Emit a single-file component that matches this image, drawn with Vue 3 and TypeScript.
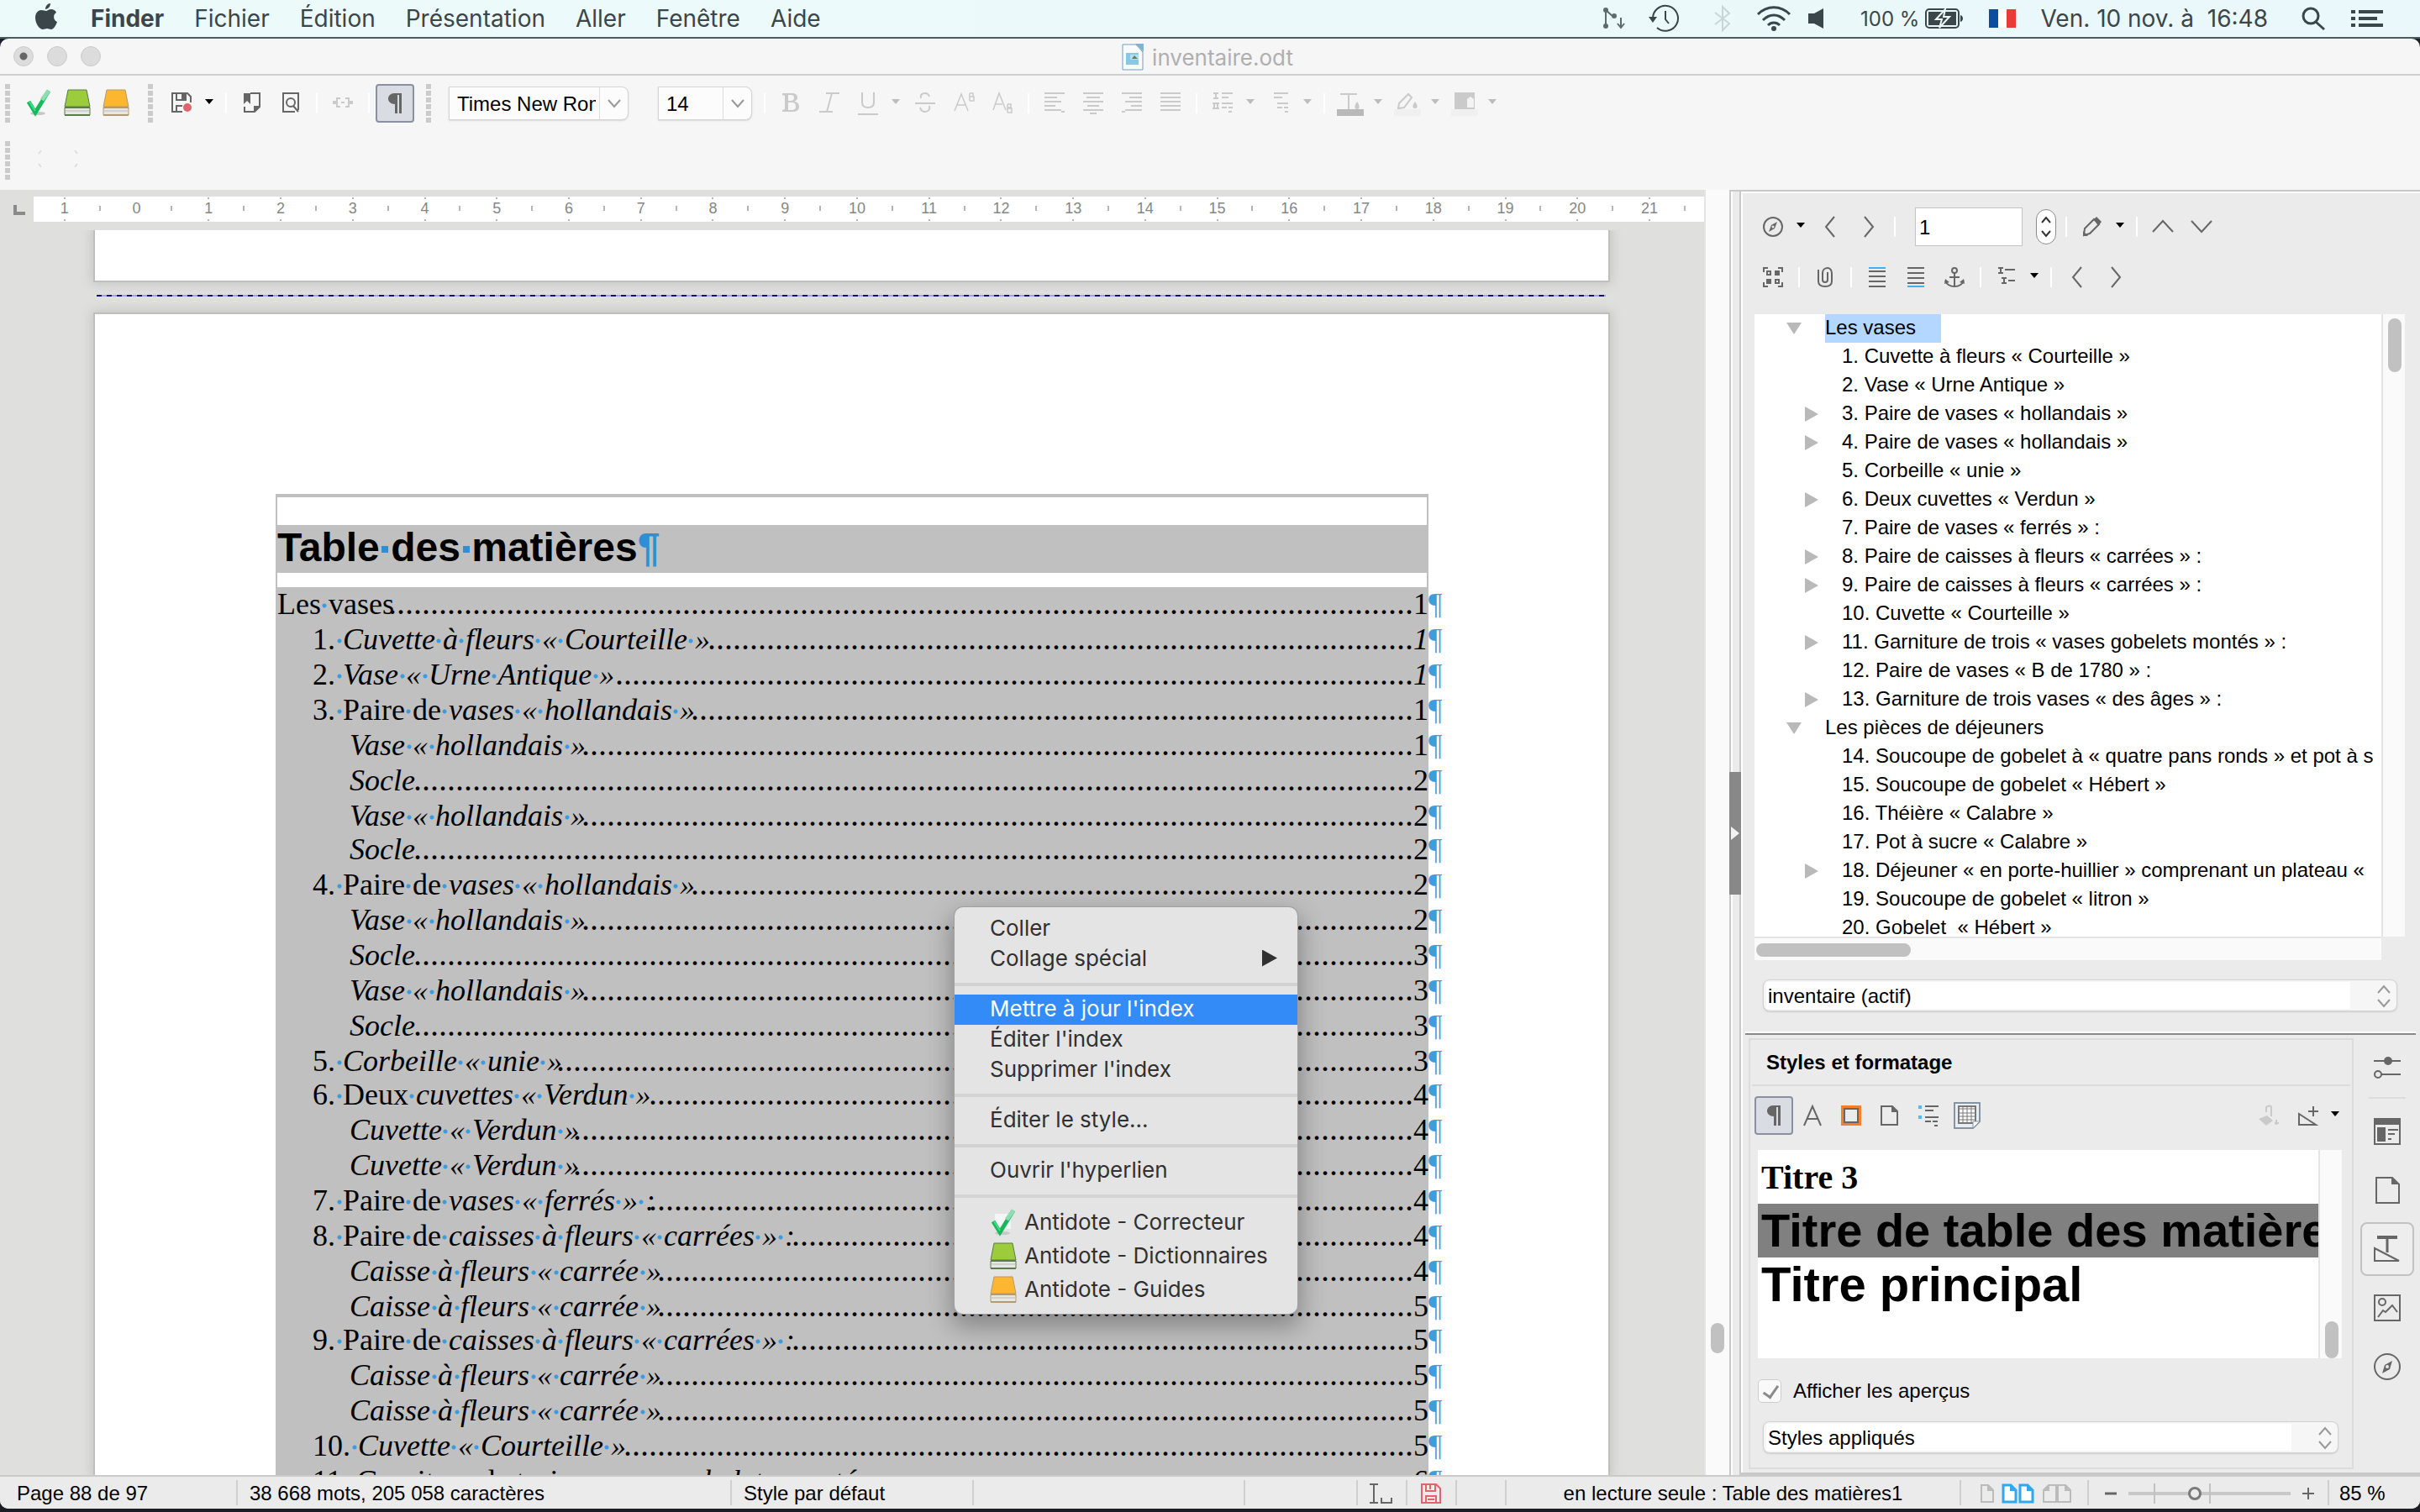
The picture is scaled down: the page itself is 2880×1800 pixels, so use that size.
<script setup lang="ts">
import { nextTick, onMounted, ref } from 'vue'

interface Tool {
  kind: 'btn' | 'sep' | 'drop'
  icon?: string
  label?: string
  off?: boolean
  on?: boolean
  big?: boolean
}
interface TocRow {
  level: number
  text: string
  page: string
  it?: boolean
}
interface TreeRow {
  text: string
  top?: boolean
  kids?: boolean
}

const line = 'fill="none" stroke="currentColor" stroke-width="2"'
const book = (c: string, d: string) =>
  `<path d="M5 1h22l4 20H1z" fill="${c}" stroke="${d}" stroke-width="1"/><path d="M1 22h30v9H1z" fill="#e6e6e2" stroke="${d}" stroke-width="1"/><path d="M1 22h30M1 31h30" stroke="${d}" stroke-width="2"/><path d="M2 26h28" stroke="#bbb" stroke-width="1"/>`
const bars = (rows: number[][]) =>
  rows.map(([x, y, w]) => `<path d="M${x} ${y}h${w}" ${line}/>`).join('')

const icons: Record<string, string> = {
  check: '<path d="M6 6h19v18H6z" fill="#f4f6f6"/><ellipse cx="15" cy="29" rx="9" ry="2" fill="#c4c8c6"/><path d="M4 15l8 13L28 2" fill="none" stroke="#17b95a" stroke-width="5"/><path d="M20 13L28 2" fill="none" stroke="#8fdcb4" stroke-width="5"/><path d="M5 15l7 11" fill="none" stroke="#3fe08a" stroke-width="2"/>',
  bookGreen: book('#9ccb3b', '#5c7a4c'),
  bookOrange: book('#fdb62f', '#b49a70'),
  save: `<path d="M13 23H1V1h18l4 4v7M6 1v8h11V1M6 23v-7h7" ${line}/><path d="M12 2h4v6h-4z" fill="currentColor"/><circle cx="19" cy="18" r="5" fill="#e0636e"/>`,
  bookmark: `<path d="M10 1h11v16l-6 6H3v-6" ${line}/><path d="M2 1h8v13l-4-4-4 4zM14 16h8l-8 8z" fill="currentColor"/>`,
  preview: `<path d="M17 23H3V1h18v20" ${line}/><circle cx="12" cy="12" r="5" ${line}/><path d="M15 16l6 7" ${line}/>`,
  link: `<path d="M9 7H5v4H1v2h4v4h4M15 7h4v4h4v2h-4v4h-4M10 12h4" ${line}/>`,
  pilcrow: '<path d="M11 0h9v24h-3V2h-2v22h-3V13C7 13 4 10 4 6.500S7 0 11 0z" fill="currentColor"/>',
  bold: '<path d="M2 1h11c5 0 7 2 7 5 0 3-2 4-4 5 3 0 6 2 6 6 0 4-3 6-8 6H2v-2l3-1V4L2 3zM9 3v7h3c2 0 4-1 4-3.500S15 3 12 3zM9 12v9h4c3 0 5-1 5-4.500S16 12 13 12z" fill="currentColor" fill-rule="evenodd"/>',
  italic: `<path d="M8 1h16M0 23h16M15 1L9 23" ${line}/>`,
  underline: `<path d="M5 0v12c0 4 2 6 7 6s7-2 7-6V0M0 26h24" ${line}/>`,
  strike: `<path d="M17 5c-1-3-3-4-5-4-4 0-6 2-5 6M17 16c1 4-1 7-5 7-3 0-5-1-6-5M0 13h24" ${line}/>`,
  sup: `<path d="M1 22L9 2l8 20M4 15h10M19 1v9M19 1h4v4h-4M19 5h5v5h-5" fill="none" stroke="currentColor" stroke-width="1.500"/>`,
  sub: `<path d="M1 21L8 1l8 20M4 14h8M18 14v10M18 14h4v4h-4M18 19h5v5h-5" fill="none" stroke="currentColor" stroke-width="1.500"/>`,
  left: bars([[0, 1, 24], [0, 6, 15], [0, 11, 20], [0, 16, 13], [0, 21, 20]]) + '<path d="M20 22h4v2h-4z" fill="currentColor"/>',
  center: bars([[0, 1, 24], [4, 6, 16], [0, 11, 24], [5, 16, 14], [0, 21, 24], [8, 25, 8]]),
  right: bars([[0, 1, 24], [9, 6, 15], [4, 11, 20], [11, 16, 13], [4, 21, 20]]) + '<path d="M0 22h4v2H0z" fill="currentColor"/>',
  justify: bars([[0, 1, 24], [0, 6, 24], [0, 11, 24], [0, 16, 24], [0, 21, 24]]),
  numbers: bars([[1, 1, 6], [1, 7, 6], [11, 1, 13], [11, 6, 8], [0, 13, 8], [0, 19, 8], [11, 13, 13], [11, 18, 6], [19, 18, 5], [19, 23, 4]]) + `<path d="M4 1v6M2 13v6M6 13v6" ${line}/>`,
  outline: bars([[5, 1, 17], [5, 6, 10], [9, 13, 13], [9, 18, 6], [17, 18, 5], [18, 23, 4]]),
  fontColor: `<path d="M4 2h20M14 2v18" ${line}/><path d="M24 11c3 4 4 9 0 9s-3-5 0-9z" fill="currentColor"/><path d="M0 20h32v8H0z" fill="#b9b9b9"/>`,
  highlight: `<path d="M6 13L17 2l4 4-9 12-7 1z" ${line}/><path d="M25 11c3 4 4 8 0 8s-3-4 0-8z" fill="currentColor"/><path d="M0 20h32v8H0z" fill="#f0f0f0"/>`,
  fill: '<path d="M4 0h24v20H4z" fill="currentColor"/><path d="M19 8l4-3 4 3v10h-8z" fill="#f3f3f3"/><path d="M0 20h32v8H0z" fill="#f0f0f0"/>',
  compass: `<circle cx="12" cy="12" r="11" ${line}/><path d="M17 6l-3 8-7 4 3-8z" fill="currentColor"/><circle cx="12" cy="12" r="1.500" fill="#ebebeb"/>`,
  prev: `<path d="M17 0L7 12l10 12" ${line}/>`,
  next: `<path d="M7 0l10 12L7 24" ${line}/>`,
  up: `<path d="M0 18L12 5l12 13" ${line}/>`,
  down: `<path d="M0 5l12 13L24 5" ${line}/>`,
  pencil: `<path d="M2 22l1-8L14 3l6 6L9 20z" ${line}/><path d="M14 3l3-3 6 6-4 5zM1 17l6 6H1z" fill="currentColor"/>`,
  content: `<path d="M1 6V1h5M18 1h5v5M23 18v5h-5M6 23H1v-5" ${line}/><path d="M5 5h4v4H5zM15 15h4v4h-4z" ${line}/><path d="M14 4h6v6h-6zM4 14h6v6H4z" fill="currentColor"/>`,
  clip: `<path d="M4 3v14c0 4 3 6 8 6s8-2 8-6V7c0-3-2-6-5-6S9 3 9 7v8c0 4 6 4 6 0V6" ${line}/>`,
  header: `<path d="M2 1h20" stroke="#3fb0f0" stroke-width="2"/>` + bars([[2, 5, 20], [2, 11, 20], [2, 17, 20], [2, 23, 20]]),
  footer: bars([[2, 1, 20], [2, 7, 20], [2, 13, 20], [2, 19, 20]]) + `<path d="M2 23h20" stroke="#3fb0f0" stroke-width="2"/>`,
  anchor: `<circle cx="12" cy="4" r="3" ${line}/><path d="M12 7v16M6 12h12M1 16c2 5 6 7 11 7s9-2 11-7" ${line}/><path d="M0 20l1-6 5 4zM24 20l-1-6-5 4z" fill="currentColor"/>`,
  levels: `<path d="M2 1h6M2 7h6M5 1v6M10 3h12M6 13h6M6 19h6M9 13v6M14 16h8" ${line}/>`,
  letterA: `<path d="M2 24L12 1l10 23M6 16h12" ${line}/>`,
  frame: '<path d="M2 2h20v20H2z" fill="none" stroke="#f57f2c" stroke-width="4"/><path d="M4 4h16v16H4z" fill="none" stroke="#666" stroke-width="2"/>',
  page: `<path d="M2 1h13l6 6v16H2z" ${line}/><path d="M14 0l8 8h-8z" fill="currentColor"/>`,
  list: `<path d="M0 0h4v4H0zM0 12h4v4H0z" fill="#55b9ee"/>` + bars([[8, 1, 16], [8, 6, 10], [8, 14, 16], [8, 19, 7], [17, 19, 6], [19, 24, 4]]),
  table: '<path d="M1 1h30v22l-8 8H1z" fill="#e8eef2" stroke="#8494a2" stroke-width="2"/><path d="M6 5h20v20H6z" fill="#fff" stroke="#777" stroke-width="2"/><path d="M6 8h20M6 13h20M6 17h20M6 21h20M11 5v20M16 5v20M21 5v20" stroke="#777" stroke-width="1"/><path d="M23 23h8l-8 8z" fill="#fff" stroke="#8494a2"/>',
  can: `<path d="M9 8V2c2-2 6-2 6 0v11" ${line}/><path d="M0 16l10-4 7 6-8 6z" fill="currentColor"/><path d="M21 17v6M19 21h5" ${line}/>`,
  newStyle: `<path d="M2 10v13h20zM19 1v12M13 7h12" ${line}/>`,
  sliders: `<path d="M0 8h32M9 24h23" ${line}/><circle cx="17" cy="8" r="5" fill="currentColor"/><circle cx="5" cy="24" r="4" ${line}/>`,
  properties: `<path d="M1 1h30v30H1z" ${line}/><path d="M0 0h32v8H0zM4 11h10v17H4z" fill="currentColor"/><path d="M17 14h12M17 19h8M17 25h4" ${line}/>`,
  pageBig: `<path d="M3 1h19l8 8v22H3z" ${line}/><path d="M21 0l9 9h-9z" fill="currentColor"/>`,
  styles: `<path d="M4 2h24" fill="none" stroke="currentColor" stroke-width="4"/><path d="M16 3v17" fill="none" stroke="currentColor" stroke-width="3"/><path d="M1 15v15h29z" ${line}/>`,
  gallery: `<path d="M1 1h30v30H1z" ${line}/><circle cx="10" cy="9" r="4" ${line}/><path d="M5 27l6-8 3 2 8-8 6 8" ${line}/>`,
  compassBig: `<circle cx="16" cy="16" r="15" ${line}/><path d="M22 9l-3 10-9 5 3-10z" fill="currentColor"/><circle cx="16" cy="16" r="2" fill="#ebebeb"/>`,
}

const menus = ['Fichier', 'Édition', 'Présentation', 'Aller', 'Fenêtre', 'Aide']

const b = (icon: string, label: string, extra: Partial<Tool> = {}): Tool => ({ kind: 'btn', icon, label, ...extra })
const sep: Tool = { kind: 'sep' }
const drop: Tool = { kind: 'drop', label: 'Plus' }
const dropOff: Tool = { kind: 'drop', label: 'Plus', off: true }
const off = { off: true }

const antidote: Tool[] = [
  b('check', 'Correcteur', { big: true }),
  b('bookGreen', 'Dictionnaires', { big: true }),
  b('bookOrange', 'Guides', { big: true }),
]
const standard: Tool[] = [
  b('save', 'Enregistrer'), drop, sep, b('bookmark', 'Repère'), b('preview', 'Aperçu'), sep,
  b('link', 'Lien', off), sep, b('pilcrow', 'Marques', { on: true }),
]
const format: Tool[] = [
  sep, b('bold', 'Gras', off), b('italic', 'Italique', off), b('underline', 'Souligné', off), dropOff,
  b('strike', 'Barré', off), b('sup', 'Exposant', off), b('sub', 'Indice', off), sep,
  b('left', 'Gauche', off), b('center', 'Centré', off), b('right', 'Droite', off), b('justify', 'Justifié', off), sep,
  b('numbers', 'Numéros', off), dropOff, b('outline', 'Plan', off), dropOff, sep,
  b('fontColor', 'Couleur', { off: true, big: true }), dropOff,
  b('highlight', 'Surlignage', { off: true, big: true }), dropOff,
  b('fill', 'Arrière-plan', { off: true, big: true }), dropOff,
]
const navA: Tool[] = [b('compass', 'Navigation'), drop, b('prev', 'Précédent'), b('next', 'Suivant'), sep]
const navB: Tool[] = [sep, b('pencil', 'Rappel'), drop, sep, b('up', 'Monter'), b('down', 'Descendre')]
const navC: Tool[] = [
  b('content', 'Contenu'), sep, b('clip', 'Mode glisser'), sep, b('header', 'En-tête'), b('footer', 'Pied de page'),
  b('anchor', 'Ancre'), sep, b('levels', 'Niveaux'), drop, sep, b('prev', 'Hausser'), b('next', 'Abaisser'),
]
const styleA: Tool[] = [
  b('pilcrow', 'Paragraphe', { on: true }), b('letterA', 'Caractère'), b('frame', 'Cadre'), b('page', 'Page'),
  b('list', 'Liste'), b('table', 'Tableau', { big: true }),
]
const styleB: Tool[] = [b('can', 'Remplir', off), b('newStyle', 'Nouveau style'), drop]

const ruler = ['1', ...Array.from({ length: 22 }, (_, i) => String(i))]

const toc: TocRow[] = [
  { level: 0, text: 'Les vases', page: '1' },
  { level: 1, text: '1. |Cuvette à fleurs « Courteille »', page: '1', it: true },
  { level: 1, text: '2. |Vase « Urne Antique »', page: '1', it: true },
  { level: 1, text: '3. Paire de |vases « hollandais »', page: '1' },
  { level: 2, text: '|Vase « hollandais »', page: '1' },
  { level: 2, text: '|Socle', page: '2' },
  { level: 2, text: '|Vase « hollandais »', page: '2' },
  { level: 2, text: '|Socle', page: '2' },
  { level: 1, text: '4. Paire de |vases « hollandais »', page: '2' },
  { level: 2, text: '|Vase « hollandais »', page: '2' },
  { level: 2, text: '|Socle', page: '3' },
  { level: 2, text: '|Vase « hollandais »', page: '3' },
  { level: 2, text: '|Socle', page: '3' },
  { level: 1, text: '5. |Corbeille « unie »', page: '3' },
  { level: 1, text: '6. Deux |cuvettes « Verdun »', page: '4' },
  { level: 2, text: '|Cuvette « Verdun »', page: '4' },
  { level: 2, text: '|Cuvette « Verdun »', page: '4' },
  { level: 1, text: '7. Paire de |vases « ferrés » :', page: '4' },
  { level: 1, text: '8. Paire de |caisses à fleurs « carrées » :', page: '4' },
  { level: 2, text: '|Caisse à fleurs « carrée »', page: '4' },
  { level: 2, text: '|Caisse à fleurs « carrée »', page: '5' },
  { level: 1, text: '9. Paire de |caisses à fleurs « carrées » :', page: '5' },
  { level: 2, text: '|Caisse à fleurs « carrée »', page: '5' },
  { level: 2, text: '|Caisse à fleurs « carrée »', page: '5' },
  { level: 1, text: '10. |Cuvette « Courteille »', page: '5' },
  { level: 1, text: '11. Garniture de trois |« vases gobelets montés » :', page: '6' },
]

/* Fills each tab leader with dots up to the end of the entry's text. */
const DOT = 10
const rowsBox = ref<HTMLElement | null>(null)
const leaders = ref<number[]>(toc.map(() => 0))
const fillLeaders = () => {
  const els = rowsBox.value?.querySelectorAll<HTMLElement>('.leader') ?? []
  leaders.value = Array.from(els, (el) => Math.round((el.clientWidth + 3) / DOT))
}
onMounted(async () => {
  await nextTick()
  fillLeaders()
  window.addEventListener('resize', fillLeaders)
})

/* Splits an entry into upright and italic runs, then into words and spaces. */
const runs = (text: string) =>
  text.split('|').map((part, i) => ({ italic: i === 1, bits: part.split(/( )/).filter((s) => s !== '') }))

const tree: TreeRow[] = [
  { text: 'Les vases', top: true },
  { text: '1. Cuvette à fleurs « Courteille »' },
  { text: '2. Vase « Urne Antique »' },
  { text: '3. Paire de vases « hollandais »', kids: true },
  { text: '4. Paire de vases « hollandais »', kids: true },
  { text: '5. Corbeille « unie »' },
  { text: '6. Deux cuvettes « Verdun »', kids: true },
  { text: '7. Paire de vases « ferrés » :' },
  { text: '8. Paire de caisses à fleurs « carrées » :', kids: true },
  { text: '9. Paire de caisses à fleurs « carrées » :', kids: true },
  { text: '10. Cuvette « Courteille »' },
  { text: '11. Garniture de trois « vases gobelets montés » :', kids: true },
  { text: '12. Paire de vases « B de 1780 » :' },
  { text: '13. Garniture de trois vases « des âges » :', kids: true },
  { text: 'Les pièces de déjeuners', top: true },
  { text: '14. Soucoupe de gobelet à « quatre pans ronds » et pot à s' },
  { text: '15. Soucoupe de gobelet « Hébert »' },
  { text: '16. Théière « Calabre »' },
  { text: '17. Pot à sucre « Calabre »' },
  { text: '18. Déjeuner « en porte-huillier » comprenant un plateau «', kids: true },
  { text: '19. Soucoupe de gobelet « litron »' },
  { text: '20. Gobelet  « Hébert »' },
]
const selected = ref(0)

const tabs = ['properties', 'pageBig', 'styles', 'gallery', 'compassBig']
const tabNames = ['Propriétés', 'Page', 'Styles', 'Galerie', 'Navigateur']
const activeTab = ref(2)

const ctxGroups = [
  ['Coller', 'Collage spécial'],
  ["Mettre à jour l'index", "Éditer l'index", "Supprimer l'index"],
  ['Éditer le style...'],
  ["Ouvrir l'hyperlien"],
]
const ctxTools = [
  { icon: 'check', text: 'Antidote - Correcteur' },
  { icon: 'bookGreen', text: 'Antidote - Dictionnaires' },
  { icon: 'bookOrange', text: 'Antidote - Guides' },
]

const fontName = ref('Times New Roman')
const fontSize = ref('14')
const pageNo = ref('1')
const previews = ref(true)
const zoom = ref(40)
</script>

<template>
  <div class="screen">
    <header class="menubar">
      <svg class="apple" viewBox="0 0 26 32"><path d="M18 0c0 4-3 7-6 7 0-4 3-7 6-7zM13 9c1 0 3-2 6-2 2 0 5 1 6 4-4 2-4 9 1 11-1 3-4 9-7 9-2 0-3-1-5-1s-3 1-5 1C5 31 0 24 0 17 0 11 4 8 7 8c3 0 4 1 6 1z" fill="currentColor" /></svg>
      <nav class="menus">
        <a href="#" class="app-name">Finder</a>
        <a v-for="m in menus" :key="m" href="#">{{ m }}</a>
      </nav>
      <div class="status-icons">
        <svg class="i-git" viewBox="0 0 26 26"><g fill="none" stroke="#5e6b6e" stroke-width="2"><path d="M3 3v19M3 3l9 8M21 12v11M17 19l4 5 4-5" /></g><g fill="#5e6b6e"><circle cx="3" cy="3" r="3" /><circle cx="3" cy="22" r="3" /><circle cx="13" cy="10" r="3" /></g></svg>
        <svg class="i-clock" viewBox="0 0 36 34"><path d="M5 17a15 15 0 1 1 5 11" fill="none" stroke="currentColor" stroke-width="2" /><path d="M0 15h10l-5 7z" fill="currentColor" /><path d="M20 8v10l4 5" fill="none" stroke="currentColor" stroke-width="2" /></svg>
        <svg class="i-bt" viewBox="0 0 20 32"><path d="M1 9l17 13-8 8V2l8 8L1 23" fill="none" stroke="#c9d6d8" stroke-width="2" /></svg>
        <svg class="i-wifi" viewBox="0 0 42 30"><g fill="none" stroke="currentColor" stroke-width="3"><path d="M2 10c11-11 27-11 38 0M8 17c8-8 18-8 26 0M14 23c4-4 10-4 14 0" /></g><circle cx="21" cy="27" r="3" fill="currentColor" /></svg>
        <svg class="i-vol" viewBox="0 0 18 24"><path d="M0 6h7l11-6v24L7 18H0z" fill="currentColor" /></svg>
        <span class="pct">100 %</span>
        <svg class="i-bat" viewBox="0 0 46 26"><rect x="1" y="2" width="39" height="22" rx="4" fill="none" stroke="currentColor" stroke-width="2" /><path d="M4 5h33v16H4z" fill="currentColor" /><path d="M42 9c4 1 4 7 0 8z" fill="currentColor" /><path d="M24 2L13 14h7l-3 10 12-13h-7z" fill="currentColor" stroke="#edf9fb" stroke-width="2" /></svg>
        <svg class="i-flag" viewBox="0 0 32 22"><path d="M0 0h11v22H0z" fill="#0b4ea0" /><path d="M11 0h10v22H11z" fill="#fff" /><path d="M21 0h11v22H21z" fill="#ea3b36" /></svg>
        <span class="clock">Ven. 10 nov. à&nbsp; 16:48</span>
        <svg class="i-find" viewBox="0 0 28 28"><circle cx="11" cy="11" r="9" fill="none" stroke="currentColor" stroke-width="3" /><path d="M17 18l10 9" stroke="currentColor" stroke-width="3" /></svg>
        <svg class="i-list" viewBox="0 0 38 20"><path d="M0 0h5v4H0zM9 0h29v4H9zM0 8h5v4H0zM9 8h22v4H9zM0 16h5v4H0zM9 16h29v4H9z" fill="currentColor" /></svg>
      </div>
    </header>

    <div class="window">
      <div class="titlebar">
        <div class="lights">
          <button class="light edited" aria-label="Fermer"></button>
          <button class="light" aria-label="Réduire"></button>
          <button class="light" aria-label="Agrandir"></button>
        </div>
        <h1 class="title">
          <svg viewBox="0 0 26 32"><path d="M1 1h16l8 9v21H1z" fill="#f8fafb" stroke="#6f9fbd" stroke-width="1" /><path d="M16 0h10v10z" fill="#7fb3d0" /><path d="M5 11h15v14H5z" fill="#8cc6e2" /><path d="M10 13h10v6H10z" fill="#aee0f6" /><path d="M12 18l3-4 4 4z" fill="#6d7a54" /></svg>
          <span>inventaire.odt</span>
        </h1>
      </div>

      <div class="toolbars">
        <div class="bar">
          <span class="grip"></span>
          <div class="tools first">
            <button v-for="(t, i) in antidote" :key="i" class="tool" :aria-label="t.label"><svg class="ic32" viewBox="0 0 32 32" v-html="icons[t.icon!]"></svg></button>
          </div>
          <span class="grip second"></span>
          <div class="tools">
            <template v-for="(t, i) in standard" :key="i">
              <span v-if="t.kind === 'sep'" class="tsep"></span>
              <button v-else-if="t.kind === 'drop'" class="drop" :aria-label="t.label"></button>
              <button v-else class="tool" :class="{ off: t.off, on: t.on }" :aria-label="t.label"><svg class="ic" viewBox="0 0 24 24" v-html="icons[t.icon!]"></svg></button>
            </template>
          </div>
          <span class="grip third"></span>
          <div class="combo wide">
            <input v-model="fontName" aria-label="Nom de la police" />
            <button aria-label="Choisir la police"><svg viewBox="0 0 16 10"><path d="M1 1l7 8 7-8" fill="none" stroke="#999" stroke-width="2" /></svg></button>
          </div>
          <div class="combo narrow">
            <input v-model="fontSize" aria-label="Taille de police" />
            <button aria-label="Choisir la taille"><svg viewBox="0 0 16 10"><path d="M1 1l7 8 7-8" fill="none" stroke="#999" stroke-width="2" /></svg></button>
          </div>
          <div class="tools fmt">
            <template v-for="(t, i) in format" :key="i">
              <span v-if="t.kind === 'sep'" class="tsep"></span>
              <button v-else-if="t.kind === 'drop'" class="drop off" :aria-label="t.label"></button>
              <button v-else class="tool off" :aria-label="t.label">
                <svg v-if="t.big" class="ic-color" viewBox="0 0 32 28" v-html="icons[t.icon!]"></svg>
                <svg v-else class="ic" viewBox="0 0 24 24" v-html="icons[t.icon!]"></svg>
              </button>
            </template>
          </div>
        </div>
        <div class="bar lower">
          <span class="grip"></span>
          <svg class="ghost" viewBox="0 0 52 20"><path d="M6 0L3 4M3 16l3 4M46 0l3 4M49 16l-3 4" fill="none" stroke="#dcdcdc" stroke-width="2" /></svg>
        </div>
      </div>

      <main class="work">
        <section class="doc">
          <div class="ruler-row">
            <span class="tabstop"><i></i></span>
            <div class="ruler">
              <span v-for="(n, i) in ruler" :key="i" class="cell" :class="{ zero: i === 1 }">{{ n }}</span>
            </div>
          </div>
          <div class="canvas">
            <div class="sheet tail"></div>
            <div class="break"></div>
            <article class="sheet body">
              <div class="index">
                <h2>Table<span class="hsp">{{ ' ' }}</span>des<span class="hsp">{{ ' ' }}</span>matières<span class="mark">¶</span></h2>
                <div ref="rowsBox" class="rows">
                  <p v-for="(r, i) in toc" :key="i" class="row" :class="'lv' + r.level"><span v-for="(run, j) in runs(r.text)" :key="j" :class="{ it: run.italic }"><span v-for="(w, k) in run.bits" :key="k" :class="{ sp: w === ' ' }">{{ w }}</span></span><span class="leader" aria-hidden="true"><span>{{ '.'.repeat(leaders[i]) }}</span></span><span :class="{ it: r.it }">{{ r.page }}</span><span class="end">¶</span></p>
                </div>
              </div>
            </article>
          </div>
        </section>

        <div class="vscroll"><span class="thumb"></span></div>
        <div class="splitter"><button aria-label="Masquer le volet"></button></div>

        <aside class="side">
          <div class="navigator">
            <div class="tools nav1">
              <template v-for="(t, i) in navA" :key="i">
                <span v-if="t.kind === 'sep'" class="tsep"></span>
                <button v-else-if="t.kind === 'drop'" class="drop" :aria-label="t.label"></button>
                <button v-else class="tool" :aria-label="t.label"><svg class="ic" viewBox="0 0 24 24" v-html="icons[t.icon!]"></svg></button>
              </template>
              <input v-model="pageNo" class="pageno" aria-label="Numéro de page" />
              <span class="stepper">
                <button aria-label="Page suivante"><svg viewBox="0 0 12 8"><path d="M1 7l5-6 5 6" fill="none" stroke="#333" stroke-width="2" /></svg></button>
                <button aria-label="Page précédente"><svg viewBox="0 0 12 8"><path d="M1 1l5 6 5-6" fill="none" stroke="#333" stroke-width="2" /></svg></button>
              </span>
              <template v-for="(t, i) in navB" :key="'b' + i">
                <span v-if="t.kind === 'sep'" class="tsep"></span>
                <button v-else-if="t.kind === 'drop'" class="drop" :aria-label="t.label"></button>
                <button v-else class="tool" :aria-label="t.label"><svg class="ic" viewBox="0 0 24 24" v-html="icons[t.icon!]"></svg></button>
              </template>
            </div>
            <div class="tools nav2">
              <template v-for="(t, i) in navC" :key="i">
                <span v-if="t.kind === 'sep'" class="tsep"></span>
                <button v-else-if="t.kind === 'drop'" class="drop" :aria-label="t.label"></button>
                <button v-else class="tool" :aria-label="t.label"><svg class="ic" viewBox="0 0 24 24" v-html="icons[t.icon!]"></svg></button>
              </template>
            </div>
            <div class="tree-wrap">
              <ul class="tree">
                <li v-for="(n, i) in tree" :key="i" :class="{ top: n.top, kids: n.kids, sel: selected === i }" @click="selected = i">
                  <i class="tw"></i><span>{{ n.text }}</span>
                </li>
              </ul>
              <div class="tree-v"><span></span></div>
            </div>
            <div class="tree-h"><span></span></div>
            <div class="picker doc-picker">
              <select aria-label="Document"><option>inventaire (actif)</option></select>
              <svg viewBox="0 0 16 26"><path d="M1 9l7-8 7 8M1 17l7 8 7-8" fill="none" stroke="#999" stroke-width="2" /></svg>
            </div>
          </div>

          <div class="deck">
            <section class="styles">
              <h3>Styles et formatage</h3>
              <div class="tools st">
                <button v-for="(t, i) in styleA" :key="i" class="tool" :class="{ on: t.on }" :aria-label="t.label">
                  <svg v-if="t.big" class="ic32" viewBox="0 0 32 32" v-html="icons[t.icon!]"></svg>
                  <svg v-else class="ic" viewBox="0 0 24 24" v-html="icons[t.icon!]"></svg>
                </button>
                <span class="fill"></span>
                <template v-for="(t, i) in styleB" :key="'b' + i">
                  <button v-if="t.kind === 'drop'" class="drop" :aria-label="t.label"></button>
                  <button v-else class="tool" :class="{ off: t.off }" :aria-label="t.label"><svg class="ic" viewBox="0 0 24 24" v-html="icons[t.icon!]"></svg></button>
                </template>
              </div>
              <div class="style-list">
                <ul>
                  <li class="t3">Titre 3</li>
                  <li class="tt">Titre de table des matières</li>
                  <li class="tp">Titre principal</li>
                </ul>
                <div class="sv"><span></span></div>
              </div>
              <label class="chk"><input v-model="previews" type="checkbox" /><span>Afficher les aperçus</span></label>
              <div class="picker st-picker">
                <select aria-label="Filtre des styles"><option>Styles appliqués</option></select>
                <svg viewBox="0 0 16 26"><path d="M1 9l7-8 7 8M1 17l7 8 7-8" fill="none" stroke="#999" stroke-width="2" /></svg>
              </div>
            </section>
            <nav class="tabs">
              <button class="tab cfg" aria-label="Réglages"><svg class="ic32" viewBox="0 0 32 32" v-html="icons.sliders"></svg></button>
              <button v-for="(t, i) in tabs" :key="t" class="tab" :class="{ active: activeTab === i }" :aria-label="tabNames[i]" @click="activeTab = i"><svg class="ic32" viewBox="0 0 32 32" v-html="icons[t]"></svg></button>
            </nav>
          </div>
        </aside>
      </main>

      <footer class="statusbar">
        <span class="s-page">Page 88 de 97</span>
        <span class="s-words">38 668 mots, 205 058 caractères</span>
        <span class="s-style">Style par défaut</span>
        <span class="s-lang"></span>
        <span class="s-blank"></span>
        <span class="s-ico"><svg viewBox="0 0 28 24"><path d="M0 1h10M0 23h10M5 1v22M14 17v6h12v-6" fill="none" stroke="#666" stroke-width="2" /></svg></span>
        <span class="s-ico"><svg viewBox="0 0 24 24"><path d="M1 1h17l5 5v17H1zM6 1v8h11V1M6 23v-8h12v8M11 1v6M8 19h8" fill="none" stroke="#e0636e" stroke-width="2" /></svg></span>
        <span class="s-ico"></span>
        <span class="s-read">en lecture seule : Table des matières1</span>
        <span class="s-views">
          <svg class="v1" viewBox="0 0 16 22"><path d="M1 1h8l6 6v14H1z" fill="none" stroke="#bbb" stroke-width="2" /><path d="M8 0l8 8H8z" fill="#bbb" /></svg>
          <svg class="v2" viewBox="0 0 38 22"><path d="M1 1h9l6 6v14H1zM21 1h9l6 6v14H21z" fill="#fff" stroke="#2fa8ee" stroke-width="3" /><path d="M9 0l8 8H9zM29 0l8 8h-8z" fill="#2fa8ee" /></svg>
          <svg class="v3" viewBox="0 0 34 22"><path d="M16 1H7L1 7v14h15zM18 1h9l6 6v14H18z" fill="none" stroke="#bbb" stroke-width="2" /><path d="M8 0L0 8h8zM26 0l8 8h-8z" fill="#bbb" /></svg>
        </span>
        <span class="s-zoom">
          <button aria-label="Zoom arrière"><svg viewBox="0 0 14 14"><path d="M0 7h14" stroke="#666" stroke-width="3" /></svg></button>
          <input v-model="zoom" type="range" min="0" max="100" aria-label="Zoom" />
          <button aria-label="Zoom avant"><svg viewBox="0 0 14 14"><path d="M0 7h14M7 0v14" stroke="#666" stroke-width="2" /></svg></button>
        </span>
        <span class="s-pct">85 %</span>
      </footer>
    </div>

    <div class="ctx" role="menu">
      <template v-for="(g, gi) in ctxGroups" :key="gi">
        <button v-for="(m, mi) in g" :key="m" role="menuitem" :class="{ hot: gi === 1 && mi === 0 }">
          <span>{{ m }}</span><i v-if="gi === 0 && mi === 1" class="sub"></i>
        </button>
        <hr />
      </template>
      <button v-for="m in ctxTools" :key="m.text" role="menuitem" class="tall">
        <svg class="ic32" viewBox="0 0 32 32" v-html="icons[m.icon]"></svg><span>{{ m.text }}</span>
      </button>
    </div>
  </div>
</template>

<style>
body {
  margin: 0;
}
</style>

<style scoped>
* {
  box-sizing: border-box;
}
.screen {
  position: relative;
  display: flex;
  flex-direction: column;
  height: 100vh;
  overflow: hidden;
  padding-bottom: 4px;
  background: #1b1d27;
  font-family: "Liberation Sans", Arial, sans-serif;
  font-size: 24px;
  color: #000;
}
button {
  border: 0;
  padding: 0;
  margin: 0;
  background: none;
  font: inherit;
  color: inherit;
}
svg {
  display: block;
  overflow: visible;
  flex: none;
}
.ic {
  width: 24px;
  height: 24px;
}
.ic32 {
  width: 32px;
  height: 32px;
}
.ic-color {
  width: 32px;
  height: 28px;
  margin-top: 4px;
}

/* menu bar */
.menubar {
  display: flex;
  align-items: center;
  height: 46px;
  flex: none;
  padding: 0 44px 0 42px;
  border-bottom: 2px solid #4b5c60;
  background: linear-gradient(90deg, #edfafa, #ebf8fb);
  color: #3a4649;
  font-family: Inter, sans-serif;
  font-size: 28px;
  white-space: nowrap;
}
.apple {
  width: 26px;
  height: 32px;
  margin-top: -4px;
}
.menus {
  display: flex;
  gap: 36px;
  margin-left: 40px;
}
.menus a {
  color: inherit;
  text-decoration: none;
}
.app-name {
  font-weight: 700;
}
.status-icons {
  display: flex;
  align-items: center;
  margin-left: auto;
}
.i-git {
  width: 26px;
  height: 26px;
  margin-right: 28px;
}
.i-clock {
  width: 36px;
  height: 34px;
  margin-right: 42px;
}
.i-bt {
  width: 20px;
  height: 32px;
  margin-right: 30px;
}
.i-wifi {
  width: 42px;
  height: 30px;
  margin-right: 20px;
}
.i-vol {
  width: 18px;
  height: 24px;
  margin-right: 44px;
}
.pct {
  font-size: 24px;
  margin-right: 7px;
}
.i-bat {
  width: 46px;
  height: 26px;
  margin-right: 30px;
}
.i-flag {
  width: 32px;
  height: 22px;
  margin-right: 29px;
}
.clock {
  margin-right: 40px;
}
.i-find {
  width: 28px;
  height: 28px;
  margin-right: 31px;
}
.i-list {
  width: 38px;
  height: 20px;
}

/* window frame */
.window {
  display: flex;
  flex-direction: column;
  flex: 1;
  min-height: 0;
  overflow: hidden;
  border-radius: 10px;
  background: #f6f6f6;
}
.titlebar {
  display: grid;
  grid-template-columns: 1fr auto 1fr;
  align-items: center;
  height: 44px;
  flex: none;
  border-bottom: 2px solid #cfcfcf;
}
.lights {
  display: flex;
  gap: 16px;
  padding-left: 16px;
}
.light {
  width: 24px;
  height: 24px;
  border: 1px solid #cacaca;
  border-radius: 50%;
  background: #dcdcdc;
}
.edited {
  background: radial-gradient(circle, #666 4px, #dcdcdc 5px);
}
.title {
  display: flex;
  align-items: center;
  gap: 10px;
  margin: 0;
  padding: 2px 6px 0 0;
  font: 400 26px Inter, sans-serif;
  color: #afafaf;
}
.title svg {
  width: 26px;
  height: 32px;
}

/* toolbars */
.toolbars {
  flex: none;
  height: 136px;
  padding: 10px 6px 0;
}
.bar {
  display: flex;
  align-items: center;
  height: 46px;
}
.lower {
  margin-top: 22px;
}
.grip {
  width: 6px;
  height: 46px;
  flex: none;
  background: repeating-linear-gradient(#cbcbcb 0 6px, transparent 6px 8px);
}
.ghost {
  width: 52px;
  height: 20px;
  margin: 0 0 4px 31px;
}
.tools {
  display: flex;
  align-items: center;
  color: #666;
}
.tools.first {
  margin: 0 15px 0 11px;
}
.second {
  margin-right: 11px;
}
.third {
  margin: 0 21px 0 14px;
}
.tool {
  display: flex;
  align-items: center;
  justify-content: center;
  width: 46px;
  height: 46px;
  flex: none;
}
.bar .tool:not(.on) {
  padding-bottom: 2px;
}
.off {
  color: #cacaca;
}
.on {
  border: 2px solid #8a90a0;
  border-radius: 4px;
  background: #d9dde3;
}
.drop {
  width: 22px;
  height: 46px;
  flex: none;
  color: #000;
}
.drop::before {
  content: "";
  display: block;
  width: 10px;
  height: 6px;
  margin: -4px auto 0 5px;
  background: currentColor;
  clip-path: polygon(0 0, 100% 0, 50% 100%);
}
.drop.off {
  color: #bdbdbd;
}
.tsep {
  width: 2px;
  height: 24px;
  margin: 0 7px;
  flex: none;
  background: #fff;
}
.combo {
  display: flex;
  height: 40px;
  flex: none;
  border: 1px solid #d4d4d4;
  border-radius: 0 8px 8px 0;
  background: #fcfcfc;
  box-shadow: 0 1px 2px #d8d8d8;
}
.combo input {
  width: 100%;
  min-width: 0;
  border: 0;
  padding: 2px 4px 0 9px;
  background: none;
  font: inherit;
  outline: 0;
}
.combo button {
  display: flex;
  align-items: center;
  justify-content: center;
  width: 34px;
  flex: none;
  border-left: 1px solid #ddd;
}
.combo svg {
  width: 16px;
  height: 10px;
}
.wide {
  width: 214px;
}
.narrow {
  width: 112px;
  margin: 0 7px 0 35px;
}

/* work area */
.work {
  display: flex;
  flex: 1;
  min-height: 0;
}
.doc {
  display: flex;
  flex-direction: column;
  flex: 1;
  min-width: 0;
  background: #dfdfdd;
}
.ruler-row {
  display: flex;
  height: 48px;
  flex: none;
  padding: 8px 0 10px;
}
.tabstop {
  width: 40px;
  padding: 10px 0 0 16px;
}
.tabstop i {
  display: block;
  width: 14px;
  height: 12px;
  border: solid #8a8a8a;
  border-width: 0 0 4px 4px;
}
.ruler {
  display: flex;
  flex: 1;
  overflow: hidden;
  padding-right: 22px;
  background: #fff;
}
.cell {
  flex: 1;
  text-align: center;
  font-size: 18px;
  line-height: 29px;
  color: #868686;
  background:
    linear-gradient(#b5b5b5, #b5b5b5) 50% 1px / 2px 2px no-repeat,
    linear-gradient(#b5b5b5, #b5b5b5) 50% 27px / 2px 2px no-repeat,
    linear-gradient(#b5b5b5, #b5b5b5) 100% 11px / 2px 6px no-repeat;
}
.cell.zero {
  background: linear-gradient(#b5b5b5, #b5b5b5) 100% 11px / 2px 6px no-repeat;
}
.cell:first-child {
  margin-left: -6px;
}
.canvas {
  display: flex;
  flex-direction: column;
  flex: 1;
  min-height: 0;
  overflow: hidden;
  padding: 0 114px 0 113px;
}
.sheet {
  background: #fff;
  box-shadow: 0 0 0 2px #bfbfbd, 0 0 12px 4px #c4c4c2;
}
.tail {
  height: 60px;
  flex: none;
}
.break {
  height: 4px;
  flex: none;
  margin: 17px 3px 19px 2px;
  background: repeating-linear-gradient(90deg, #10107c 0 6px, #a0a0f0 6px 12px) 0 0 / 100% 2px no-repeat;
}
.body {
  flex: 1;
  min-height: 0;
  padding: 214px 214px 0 215px;
}
.index {
  border: solid #c0c0c0;
  border-width: 4px 2px 0;
  padding-top: 33px;
}
.index h2 {
  margin: 0 0 17px;
  height: 57px;
  line-height: 54px;
  font-size: 48px;
  font-weight: 700;
  background: #c0c0c0;
  white-space: pre;
}
.hsp {
  background: linear-gradient(#2f8fd6, #2f8fd6) 50% 56% / 8px 8px no-repeat;
}
.mark {
  color: #2f8fd6;
}
.rows {
  margin: 0 -2px;
  background: #c0c0c0;
}
.row {
  display: flex;
  height: 42px;
  margin: 0;
  padding-left: 2px;
  font-family: "Liberation Serif", "Times New Roman", serif;
  font-size: 36px;
  line-height: 40px;
  white-space: pre;
}
.row:nth-child(7n) {
  height: 40px;
}
.lv1 {
  padding-left: 44px;
}
.lv2 {
  padding-left: 88px;
}
.it {
  font-style: italic;
}
.sp {
  background: radial-gradient(circle, #3a9ce0 2px, transparent 3px) 50% 56% / 6px 6px no-repeat;
}
.leader {
  display: flex;
  justify-content: flex-end;
  flex: 1;
  min-width: 0;
  font-size: 40px;
  line-height: 38px;
}
.end {
  width: 0;
  color: #3b9fdc;
}

.vscroll {
  display: flex;
  flex-direction: column;
  justify-content: flex-end;
  width: 30px;
  flex: none;
  padding: 0 0 145px 6px;
  border-left: 2px solid #e4e4e4;
  background: #fafafa;
}
.thumb {
  width: 16px;
  height: 36px;
  border-radius: 8px;
  background: #c1c1c1;
}
.splitter {
  display: flex;
  align-items: center;
  width: 14px;
  flex: none;
  border: solid #c8c8c8;
  border-width: 2px 2px 0 2px;
  background: #ebebeb;
  box-shadow: inset 2px 0 #fff;
}
.splitter button {
  width: 14px;
  height: 146px;
  margin: 0 -2px;
  flex: none;
  background: #888;
}
.splitter button::before {
  content: "";
  display: block;
  width: 10px;
  height: 16px;
  margin-left: 2px;
  background: #f2f2f2;
  clip-path: polygon(0 0, 100% 50%, 0 100%);
}

/* sidebar */
.side {
  display: flex;
  flex-direction: column;
  width: 808px;
  flex: none;
  padding-left: 2px;
  border-top: 2px solid #c8c8c8;
  border-bottom: 3px solid #c8c8c8;
  background: #ebebeb;
  box-shadow: inset 2px 2px #fff;
}
.navigator {
  display: flex;
  flex-direction: column;
  flex: 1;
  min-height: 0;
  margin: 0 5px 0 3px;
  padding: 19px 13px 26px 10px;
  border-bottom: 2px solid #888;
  box-shadow: 0 -2px #fff inset;
}
.nav1 {
  height: 46px;
}
.nav2 {
  height: 46px;
  margin: 14px 0 21px;
}
.pageno {
  width: 128px;
  height: 46px;
  margin: 0 16px;
  border: 1px solid #c4c4c4;
  padding: 2px 4px 0;
  background: #fff;
  font: inherit;
}
.stepper {
  display: flex;
  flex-direction: column;
  justify-content: space-evenly;
  width: 24px;
  height: 42px;
  margin-right: 4px;
  border: 1px solid #8c8c8c;
  border-radius: 12px;
  background: #fff;
}
.stepper button {
  display: flex;
  justify-content: center;
}
.stepper svg {
  width: 12px;
  height: 8px;
}
.tree-wrap {
  display: flex;
  flex: 1;
  min-height: 0;
  margin-left: 1px;
}
.tree {
  flex: 1;
  min-width: 0;
  overflow: hidden;
  margin: 0;
  padding: 0;
  list-style: none;
  background: #fff;
}
.tree li {
  display: flex;
  height: 34px;
  padding-left: 60px;
  white-space: pre;
}
.tree li.top {
  padding-left: 38px;
}
.tree li span {
  height: 34px;
  line-height: 32px;
}
.tw {
  width: 16px;
  height: 18px;
  margin: 8px 28px 0 0;
  flex: none;
}
.kids .tw {
  background: #b9b9b9;
  clip-path: polygon(0 0, 100% 50%, 0 100%);
}
.top .tw {
  width: 18px;
  height: 14px;
  margin-top: 10px;
  background: #b9b9b9;
  clip-path: polygon(0 0, 100% 0, 50% 100%);
}
.sel span {
  padding-right: 30px;
  background: #b3d7ff;
}
.tree-v {
  width: 28px;
  padding: 5px 4px 0 6px;
  border-left: 2px solid #e4e4e4;
  background: #fafafa;
}
.tree-v span,
.tree-h span {
  display: block;
  border-radius: 8px;
  background: #c1c1c1;
}
.tree-v span {
  height: 64px;
}
.tree-h {
  height: 28px;
  flex: none;
  margin: 0 28px 23px 1px;
  padding: 6px 2px;
  border-top: 2px solid #e4e4e4;
  background: #fafafa;
}
.tree-h span {
  width: 184px;
  height: 16px;
}
.picker {
  position: relative;
  flex: none;
  height: 38px;
  border: 1px solid #d2d2d2;
  border-radius: 8px;
  background: #f6f6f6;
  box-shadow: 0 1px 2px #cfcfcf;
}
.picker select {
  width: 100%;
  height: 100%;
  appearance: none;
  border: 0;
  padding: 0 5px;
  background: linear-gradient(#fff, #fff) 3px 2px / calc(100% - 58px) 32px no-repeat;
  font: inherit;
  color: inherit;
}
.picker svg {
  position: absolute;
  right: 7px;
  top: 6px;
  width: 16px;
  height: 26px;
}
.doc-picker {
  margin: 0 9px 0 11px;
}
.deck {
  display: flex;
  flex: none;
  padding-left: 7px;
}
.styles {
  display: flex;
  flex-direction: column;
  width: 720px;
  flex: none;
  margin: 4px 0 4px;
  border: 2px solid #dcdcdc;
}
.styles h3 {
  margin: 0 2px;
  padding-left: 17px;
  height: 55px;
  line-height: 54px;
  border-bottom: 2px solid #dcdcdc;
  font-size: 24px;
  font-weight: 700;
}
.st {
  height: 46px;
  margin: 12px 8px 18px 5px;
}
.fill {
  flex: 1;
}
.style-list {
  display: flex;
  height: 248px;
  margin: 0 12px 0 9px;
  background: #fff;
}
.style-list ul {
  flex: 1;
  min-width: 0;
  overflow: hidden;
  margin: 0;
  padding: 0;
  list-style: none;
}
.style-list li {
  height: 64px;
  padding-left: 4px;
  line-height: 64px;
  font-weight: 700;
  white-space: nowrap;
}
.style-list .t3 {
  font-family: "Liberation Serif", "Times New Roman", serif;
  font-size: 40px;
  line-height: 66px;
}
.style-list .tt {
  font-size: 56px;
  background: #808080;
}
.style-list .tp {
  font-size: 58px;
}
.sv {
  display: flex;
  flex-direction: column;
  justify-content: flex-end;
  width: 28px;
  padding: 0 4px 0 6px;
  border-left: 2px solid #e4e4e4;
  background: #fafafa;
}
.sv span {
  height: 44px;
  border-radius: 8px;
  background: #c1c1c1;
}
.chk {
  display: flex;
  align-items: center;
  gap: 14px;
  height: 28px;
  margin: 25px 0 22px 9px;
}
.chk input {
  appearance: none;
  width: 28px;
  height: 28px;
  margin: 0;
  border: 1px solid #cdcdcd;
  border-radius: 5px;
  background: #f9f9f9;
}
.chk input:checked::before {
  content: "";
  display: block;
  width: 8px;
  height: 15px;
  margin: 3px 0 0 9px;
  border: solid #8a8a8a;
  border-width: 0 3px 3px 0;
  transform: rotate(35deg);
}
.st-picker {
  margin: 0 16px 17px 15px;
}
.tabs {
  display: flex;
  flex-direction: column;
  align-items: center;
  width: 79px;
  padding-top: 4px;
}
.tab {
  display: flex;
  align-items: center;
  justify-content: center;
  width: 64px;
  height: 64px;
  margin-bottom: 6px;
  color: #666;
}
.cfg {
  width: 44px;
  height: 72px;
  margin-bottom: 7px;
  border-bottom: 2px solid #dcdcdc;
}
.active {
  border: 2px solid #c2c2c2;
  border-radius: 8px;
  background: #eee;
}

/* status bar */
.statusbar {
  display: flex;
  height: 40px;
  flex: none;
  border-top: 2px solid #cbcbcb;
  background: #ebebeb;
  white-space: nowrap;
}
.statusbar > span {
  display: flex;
  align-items: center;
  flex: none;
  padding: 2px 0 0 14px;
  margin: 4px 0;
  border-left: 2px solid #cfcfcf;
}
.statusbar > .s-page {
  width: 281px;
  padding-left: 18px;
  border-left-color: transparent;
}
.s-words {
  width: 588px;
}
.s-style {
  width: 288px;
}
.s-lang {
  width: 323px;
}
.s-blank {
  width: 134px;
}
.s-ico {
  width: 59px;
}
.s-ico svg {
  width: 28px;
  height: 24px;
}
.statusbar > .s-read {
  flex: 1;
  justify-content: center;
  padding-left: 0;
}
.statusbar > .s-views {
  width: 152px;
  gap: 10px;
  padding-left: 23px;
}
.s-views svg {
  height: 22px;
}
.v1 {
  width: 16px;
}
.v2 {
  width: 38px;
}
.v3 {
  width: 34px;
}
.statusbar > .s-zoom {
  width: 286px;
  padding-left: 19px;
  gap: 14px;
}
.s-zoom button svg {
  width: 14px;
  height: 14px;
}
.s-zoom input {
  width: 193px;
  height: 24px;
  margin: 0;
  appearance: none;
  background:
    linear-gradient(#c2c2c2, #c2c2c2) 30px 0 / 2px 100% no-repeat,
    linear-gradient(#c2c2c2, #c2c2c2) 96px 0 / 2px 100% no-repeat,
    linear-gradient(#c8c8c8, #c8c8c8) 0 50% / 100% 4px no-repeat;
}
.s-zoom input::-webkit-slider-thumb {
  appearance: none;
  width: 16px;
  height: 16px;
  border: 3px solid #7a7a7a;
  border-radius: 50%;
  background: #ebebeb;
}
.statusbar > .s-pct {
  width: 110px;
  padding-left: 12px;
}

/* context menu */
.ctx {
  position: absolute;
  left: 1136px;
  top: 1080px;
  display: flex;
  flex-direction: column;
  width: 408px;
  padding: 8px 0;
  border-radius: 10px;
  background: #e4e4e4;
  box-shadow: 0 0 0 1px #a0a0a0, 0 12px 30px 4px rgba(0, 0, 0, 0.3);
  font-family: Inter, sans-serif;
  font-size: 26px;
  color: #303030;
}
.ctx button {
  display: flex;
  align-items: center;
  height: 36px;
  padding: 0 24px 3px 42px;
  text-align: left;
  white-space: nowrap;
}
.ctx .hot {
  background: #328bf6;
  color: #fff;
}
.ctx .tall {
  height: 40px;
  gap: 9px;
}
.ctx hr {
  width: 100%;
  height: 4px;
  margin: 10px 0;
  border: 0;
  background: #d3d3d3;
}
.sub {
  width: 18px;
  height: 20px;
  margin-left: auto;
  background: #303030;
  clip-path: polygon(0 0, 100% 50%, 0 100%);
}
</style>
